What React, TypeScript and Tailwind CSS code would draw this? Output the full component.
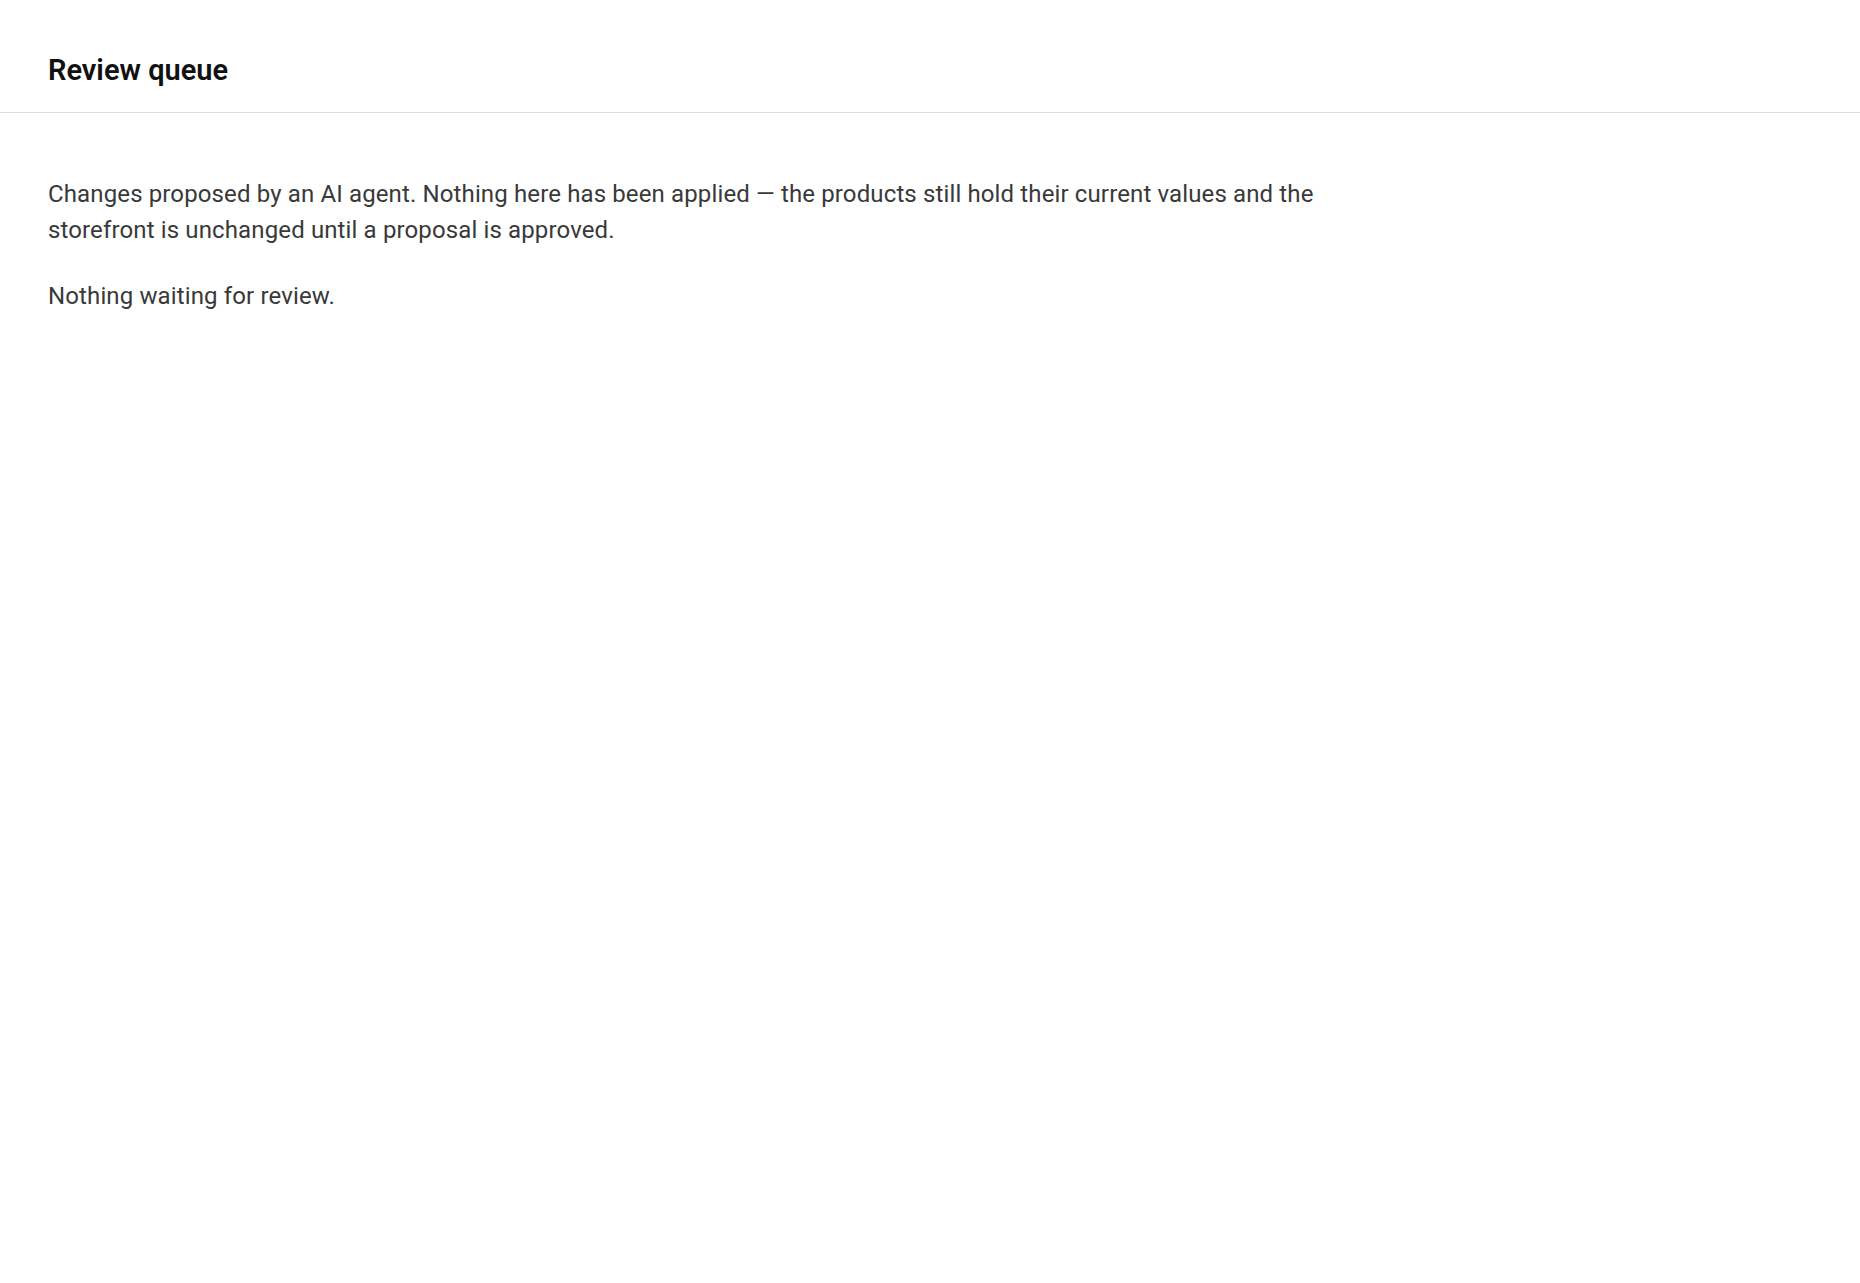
export default function App() {
  return (
    <div className="min-h-screen bg-white font-['Roboto','Liberation_Sans',sans-serif]">
      <header className="border-b border-[#dddddd] px-12 pt-[51px] pb-[23px]">
        <h1 className="text-[29px] leading-[38px] font-semibold text-[#111111]">Review queue</h1>
      </header>
      <main className="px-12 pt-[63px]">
        <p className="max-w-[1290px] text-[24px] leading-[36px] tracking-[0.13px] text-[#393939]">
          Changes proposed by an AI agent. Nothing here has been applied — the products still hold their current values and the storefront is unchanged until a proposal is approved.
        </p>
        <p className="mt-[30px] text-[24px] leading-[36px] tracking-[0.13px] text-[#393939]">Nothing waiting for review.</p>
      </main>
    </div>
  );
}
